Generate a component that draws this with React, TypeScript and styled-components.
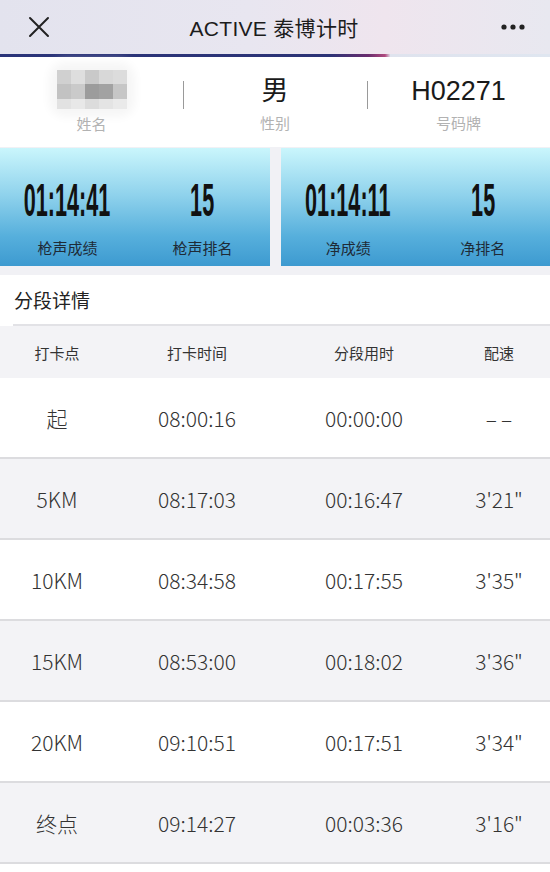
import styled, { createGlobalStyle } from "styled-components";

const GlobalStyle = createGlobalStyle`
  html, body {
    margin: 0;
    padding: 0;
    background: #fff;
    overflow: hidden;
  }
  body {
    font-family: "Liberation Sans", "Noto Sans CJK SC", sans-serif;
    color: #222;
  }
`;

const splits = [
  { point: "起", clock: "08:00:16", split: "00:00:00", pace: "–\u2009–" },
  { point: "5KM", clock: "08:17:03", split: "00:16:47", pace: "3'21\"" },
  { point: "10KM", clock: "08:34:58", split: "00:17:55", pace: "3'35\"" },
  { point: "15KM", clock: "08:53:00", split: "00:18:02", pace: "3'36\"" },
  { point: "20KM", clock: "09:10:51", split: "00:17:51", pace: "3'34\"" },
  { point: "终点", clock: "09:14:27", split: "00:03:36", pace: "3'16\"" },
];

const mosaic = [
  ["#d0d0d0", "#dedede", "#c9c9c9", "#d8d8d8", "#dcdcdc"],
  ["#c2c2c2", "#cacaca", "#9c9c9c", "#a2a2a2", "#c6c6c6"],
  ["#e2e2e2", "#e8e8e8", "#dcdcdc", "#e4e4e4", "#eaeaea"],
];

function App() {
  return (
    <Page>
      <GlobalStyle />
      <NavBar>
        <NavIcon>
          <svg width="22" height="22" viewBox="0 0 22 22">
            <path d="M2 2 L20 20 M20 2 L2 20" stroke="#222" strokeWidth="2" strokeLinecap="round" />
          </svg>
        </NavIcon>
        <NavTitle>ACTIVE 泰博计时</NavTitle>
        <NavIcon>
          <svg width="24" height="8" viewBox="0 0 24 8">
            <circle cx="3" cy="4" r="2.6" fill="#222" />
            <circle cx="12" cy="4" r="2.6" fill="#222" />
            <circle cx="21" cy="4" r="2.6" fill="#222" />
          </svg>
        </NavIcon>
      </NavBar>
      <ProgressLine />

      <InfoRow>
        <InfoCell>
          <Mosaic>
            {mosaic.flat().map((c, i) => (
              <MosaicBlock key={i} $color={c} />
            ))}
          </Mosaic>
          <InfoLabel>姓名</InfoLabel>
        </InfoCell>
        <InfoCell $divider>
          <InfoValue>男</InfoValue>
          <InfoLabel>性别</InfoLabel>
        </InfoCell>
        <InfoCell $divider>
          <InfoValue>H02271</InfoValue>
          <InfoLabel>号码牌</InfoLabel>
        </InfoCell>
      </InfoRow>

      <Cards>
        <ResultCard>
          <Stat>
            <BigNumber>01:14:41</BigNumber>
            <StatLabel>枪声成绩</StatLabel>
          </Stat>
          <Stat>
            <BigNumber>15</BigNumber>
            <StatLabel>枪声排名</StatLabel>
          </Stat>
        </ResultCard>
        <ResultCard>
          <Stat>
            <BigNumber>01:14:11</BigNumber>
            <StatLabel>净成绩</StatLabel>
          </Stat>
          <Stat>
            <BigNumber>15</BigNumber>
            <StatLabel>净排名</StatLabel>
          </Stat>
        </ResultCard>
      </Cards>

      <SectionTitle>分段详情</SectionTitle>

      <Table>
        <HeadRow>
          <HeadCell>打卡点</HeadCell>
          <HeadCell>打卡时间</HeadCell>
          <HeadCell>分段用时</HeadCell>
          <HeadCell>配速</HeadCell>
        </HeadRow>
        {splits.map((s, i) => (
          <Row key={s.point} $alt={i % 2 === 1}>
            <Cell>{s.point}</Cell>
            <Cell>{s.clock}</Cell>
            <Cell>{s.split}</Cell>
            <Cell>{s.pace}</Cell>
          </Row>
        ))}
      </Table>
    </Page>
  );
}
export default App;

const Page = styled.div`
  width: 550px;
  background: #fff;
`;

const NavBar = styled.div`
  height: 54px;
  padding: 0 24px 0 26px;
  display: flex;
  align-items: center;
  justify-content: space-between;
  background: linear-gradient(90deg, #e3e3ee 0%, #e8e6f0 45%, #efe5ee 70%, #e8e8f0 100%);
`;

const NavIcon = styled.div`
  width: 26px;
  display: flex;
  align-items: center;
  justify-content: center;
`;

const NavTitle = styled.div`
  font-size: 21px;
  color: #1c1c1c;
  letter-spacing: 0.3px;
  margin-right: 4px;
`;

const ProgressLine = styled.div`
  height: 3px;
  background: linear-gradient(
    90deg,
    #2a3479 0%,
    #2c3376 60%,
    #6a2d6e 67%,
    #b04a7e 70%,
    #dfe3ee 71%,
    #dfe6f0 100%
  );
`;

const InfoRow = styled.div`
  height: 90px;
  display: grid;
  grid-template-columns: 183px 184px 183px;
  align-items: center;
`;

const InfoCell = styled.div<{ $divider?: boolean }>`
  position: relative;
  display: flex;
  flex-direction: column;
  align-items: center;
  justify-content: center;
  height: 100%;
  ${(p) =>
    p.$divider &&
    `
    &::before {
      content: "";
      position: absolute;
      left: 0;
      top: 24px;
      height: 28px;
      width: 1px;
      background: #9a9a9a;
    }
  `}
`;

const InfoValue = styled.div`
  font-size: 27px;
  line-height: 34px;
  color: #1a1a1a;
  margin-top: 4px;
`;

const InfoLabel = styled.div`
  font-family: "Noto Sans CJK SC", sans-serif;
  font-size: 15px;
  line-height: 22px;
  color: #b2b2b2;
  margin-top: 4px;
`;

const Mosaic = styled.div`
  display: grid;
  grid-template-columns: repeat(5, 14px);
  grid-template-rows: 14px 15px 10px;
  box-shadow: 0 0 10px 8px #f6f6f6;
  border-radius: 8px;
`;

const MosaicBlock = styled.div<{ $color: string }>`
  background: ${(p) => p.$color};
`;

const Cards = styled.div`
  display: grid;
  grid-template-columns: 270px 1fr;
  gap: 11px;
  padding-top: 1px;
  padding-bottom: 9px;
  background: #f1f1f5;
`;

const ResultCard = styled.div`
  height: 118px;
  display: grid;
  grid-template-columns: repeat(2, minmax(0, 1fr));
  background: linear-gradient(180deg, #caf6fc 0%, #8fd2ec 40%, #56afdc 75%, #3d9ad0 100%);
`;

const Stat = styled.div`
  display: flex;
  flex-direction: column;
  align-items: center;
  padding-top: 30px;
  min-width: 0;
`;

const BigNumber = styled.div`
  font-family: "Liberation Sans Narrow", "Liberation Sans", sans-serif;
  font-weight: 700;
  font-size: 47px;
  line-height: 44px;
  height: 44px;
  color: #111;
  transform: scaleX(0.46);
  white-space: nowrap;
`;

const StatLabel = styled.div`
  font-family: "Noto Sans CJK SC", sans-serif;
  font-size: 15px;
  line-height: 20px;
  color: #1e2a36;
  margin-top: 16px;
`;

const SectionTitle = styled.div`
  height: 49px;
  display: flex;
  align-items: center;
  margin-left: 13px;
  padding-left: 1px;
  font-family: "Noto Sans CJK SC", sans-serif;
  font-size: 19px;
  color: #222;
  border-bottom: 2px solid #e2e2e6;
`;

const Table = styled.div`
  display: flex;
  flex-direction: column;
`;

const columns = `
  display: grid;
  grid-template-columns: 114px 166px 168px 1fr;
  align-items: center;
  justify-items: center;
`;

const HeadRow = styled.div`
  ${columns}
  height: 52px;
  background: #f3f3f6;
`;

const HeadCell = styled.div`
  font-family: "Noto Sans CJK SC", sans-serif;
  font-size: 15px;
  color: #333;
`;

const Row = styled.div<{ $alt: boolean }>`
  ${columns}
  height: 79px;
  background: ${(p) => (p.$alt ? "#f3f3f6" : "#fff")};
  border-bottom: 2px solid #dcdcdf;
`;

const Cell = styled.div`
  font-family: "Noto Sans CJK SC", "Liberation Sans", sans-serif;
  font-weight: 300;
  font-size: 21px;
  color: #333;
`;
